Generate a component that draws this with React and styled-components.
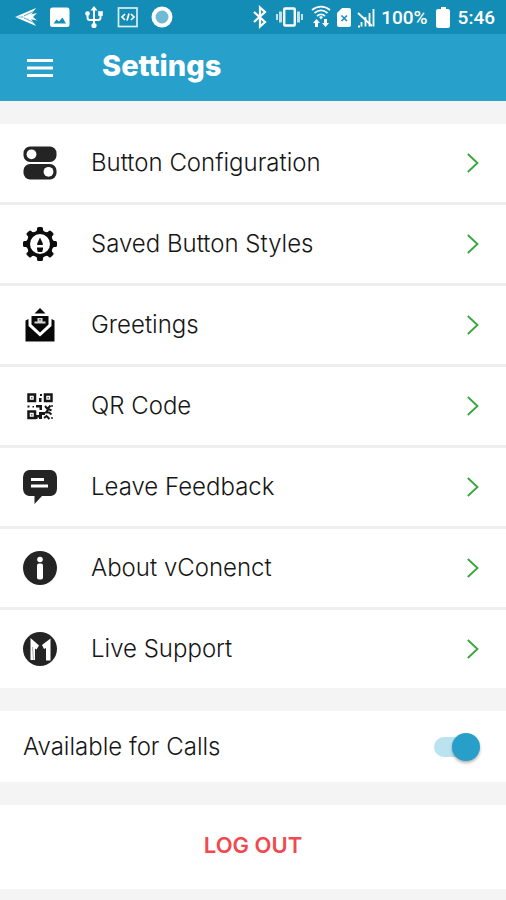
import { useState } from "react";
import styled, { createGlobalStyle } from "styled-components";

const GlobalStyle = createGlobalStyle`
  * {
    box-sizing: border-box;
  }
  body {
    margin: 0;
    background-color: #f4f4f4;
    color: #161616;
    font-family: Inter, "Open Sans", sans-serif;
  }
  svg {
    display: block;
    flex-shrink: 0;
  }
`;

const StatusBar = styled.div`
  display: flex;
  justify-content: space-between;
  align-items: center;
  height: 34px;
  padding: 0 11px 0 14px;
  background-color: #138db6;
  color: white;
  font: 500 19px Roboto, sans-serif;
`;

const StatusGroup = styled.div`
  display: flex;
  align-items: center;
  gap: ${(props) => props.$gap}px;
`;

const Header = styled.header`
  display: flex;
  align-items: center;
  gap: 48px;
  height: 67px;
  padding: 0 26px;
  background-color: #27a1cb;
  color: white;
`;

const MenuButton = styled.button`
  padding: 0;
  border: 0;
  background: none;
  color: inherit;
  cursor: pointer;
`;

const Title = styled.h1`
  margin: 0;
  padding-bottom: 4px;
  font-size: 29px;
  line-height: 36px;
  font-weight: 800;
`;

const List = styled.ul`
  display: flex;
  flex-direction: column;
  gap: 3px;
  margin: 23px 0;
  padding: 0;
  list-style: none;
  background-color: #eeeeee;
`;

const Row = styled.a`
  display: flex;
  align-items: center;
  gap: 34px;
  height: 78px;
  padding: 0 26px 0 23px;
  background-color: white;
  color: inherit;
  text-decoration: none;
`;

const RowText = styled.span`
  flex: 1;
  font-size: 24px;
  line-height: 32px;
  font-weight: 300;
`;

const CallsRow = styled.label`
  display: flex;
  align-items: center;
  height: 71px;
  padding: 0 26px 0 23px;
  background-color: white;
  cursor: pointer;
`;

const Switch = styled.input`
  appearance: none;
  position: relative;
  width: 46px;
  height: 28px;
  margin: 0;
  cursor: pointer;

  &::before {
    content: "";
    position: absolute;
    top: 4px;
    left: 0;
    width: 42px;
    height: 20px;
    border-radius: 10px;
    background-color: #dddddd;
  }
  &::after {
    content: "";
    position: absolute;
    top: 0;
    left: 0;
    width: 28px;
    height: 28px;
    border-radius: 50%;
    background-color: #f4f4f4;
    box-shadow: 0 2px 3px rgba(0, 0, 0, 0.3);
  }
  &:checked::before {
    background-color: #bbe2ef;
  }
  &:checked::after {
    left: 18px;
    background-color: #279fc8;
  }
`;

const LogoutButton = styled.button`
  display: block;
  width: 100%;
  height: 84px;
  margin: 23px 0 0;
  padding: 0 0 4px;
  border: 0;
  background-color: white;
  color: #ef4a4f;
  font: 600 22px Inter, "Open Sans", sans-serif;
  cursor: pointer;
`;

/* status bar icons */

const ArrowIcon = () => (
  <svg width="24" height="24" viewBox="0 0 24 24" fill="currentColor">
    <path d="M1 12 22 3l-5 7-7 1.500z" />
    <path d="M1 12 22 21l-5-7-7-1.500z" />
    <path d="M9 11.500 23 8l-4 4 4 3.500-14-3z" />
    <path d="m10 10.800 11-5M10 13l10 4.500" stroke="#138db6" strokeWidth=".7" />
  </svg>
);

const PictureIcon = () => (
  <svg width="24" height="24" viewBox="0 0 24 24" fill="currentColor">
    <rect x="2" y="2.500" width="19.500" height="19.500" rx="2.500" />
    <path d="m5.500 18.500 3-4 2.500 2 3.500-4 3.500 6z" fill="#138db6" />
  </svg>
);

const UsbIcon = () => (
  <svg width="24" height="24" viewBox="0 0 24 24" fill="currentColor">
    <path d="m12 1 3.500 4.500h-7z" />
    <path
      d="M12 4v15M5.500 8.500v4c0 1.500 1 2.500 2.500 2.500h8c1.500 0 2.500-1 2.500-2.500v-4"
      fill="none"
      stroke="currentColor"
      strokeWidth="2"
    />
    <circle cx="5.500" cy="8.500" r="2.300" />
    <rect x="16.200" y="6.200" width="4.600" height="4.600" />
    <circle cx="12" cy="20.500" r="2.600" />
  </svg>
);

const CodeIcon = () => (
  <svg
    width="24"
    height="24"
    viewBox="0 0 24 24"
    fill="none"
    stroke="currentColor"
    strokeWidth="1.700"
  >
    <rect x="2.500" y="3" width="18.500" height="18.500" opacity=".85" />
    <path d="M9 9 6 12l3 3M15 9l3 3-3 3M13 8.500l-2 7" />
  </svg>
);

const RecordIcon = () => (
  <svg width="24" height="24" viewBox="0 0 24 24">
    <circle cx="12" cy="12" r="10.500" fill="white" />
    <circle cx="12" cy="12" r="6.500" fill="#6fbbd5" />
  </svg>
);

const BluetoothIcon = () => (
  <svg
    width="16"
    height="24"
    viewBox="0 0 16 24"
    fill="none"
    stroke="currentColor"
    strokeWidth="2.200"
  >
    <path d="m1 7 11 10-5 4.500v-19L12 7 1 17" />
  </svg>
);

const VibrateIcon = () => (
  <svg width="30" height="24" viewBox="0 0 30 24" fill="currentColor">
    <rect x="9.200" y="3.500" width="10.600" height="17" rx="1" fill="none" stroke="currentColor" strokeWidth="2.400" />
    <path d="M4 6.500h3v11H4zM1 9h2v6H1zM22 6.500h3v11h-3zM26 9h2v6h-2z" opacity=".75" />
  </svg>
);

const WifiIcon = () => (
  <svg width="20" height="24" viewBox="0 0 20 24" fill="currentColor">
    <g fill="none" stroke="currentColor" strokeWidth="1.700">
      <path d="M1 5c5.500-4.500 12.500-4.500 18 0M3.500 8c4-3.300 9-3.300 13 0M6 11c2.500-2 5.500-2 8 0" />
    </g>
    <path d="m8 12 2-1 2 1-2 2.500z" />
    <path d="m5.500 14 3.500 4H7v4H4v-4H2zM14.500 22l-3.500-4h2v-4h3v4h2z" />
  </svg>
);

const SimIcon = () => (
  <svg width="14" height="24" viewBox="0 0 14 24">
    <path d="M5 3h7q2 0 2 2v15q0 2-2 2H2q-2 0-2-2V8z" fill="white" />
    <path d="m4.500 10.500 5.500 5.500m0-5.500L4.500 16" stroke="#138db6" strokeWidth="1.500" />
  </svg>
);

const SignalIcon = () => (
  <svg
    width="18"
    height="24"
    viewBox="0 0 18 24"
    fill="none"
    stroke="currentColor"
    strokeWidth="1.800"
  >
    <path d="M16.500 4v17.500M12.500 8v13.500M8.500 12v9.500M4.500 17v4.500M1 21.500h2" />
    <path d="m1 8 14 13" />
  </svg>
);

const BatteryIcon = () => (
  <svg width="18" height="24" viewBox="0 0 18 24" fill="currentColor">
    <path d="M7 2h5v2h2q2 0 2 2v15q0 2-2 2H4q-2 0-2-2V6q0-2 2-2h3z" />
  </svg>
);

const MenuIcon = () => (
  <svg width="28" height="20" viewBox="0 0 28 20" fill="currentColor">
    <path d="M1 1h26v3H1zM1 8.500h26v3H1zM1 16h26v3H1z" />
  </svg>
);

/* list icons, all on a 34px grid */

const TogglesIcon = () => (
  <svg width="34" height="34" viewBox="0 0 34 34" fill="#242424">
    <rect x="0.500" y="0.500" width="33" height="15.500" rx="6.500" />
    <rect x="0.500" y="18" width="33" height="15.500" rx="6.500" />
    <circle cx="8.500" cy="8.300" r="4.900" fill="white" />
    <circle cx="25.500" cy="25.800" r="4.900" fill="white" />
  </svg>
);

const GearIcon = () => (
  <svg width="34" height="34" viewBox="0 0 34 34" fill="#0c0c0c">
    {[0, 45, 90, 135, 180, 225, 270, 315].map((angle) => (
      <path
        key={angle}
        d="M12 6 14 3V1.500Q14 0 15.500 0h3Q20 0 20 1.500V3l2 3z"
        transform={`rotate(${angle} 17 17)`}
      />
    ))}
    <circle cx="17" cy="17" r="13.300" />
    <circle cx="17" cy="17" r="10" fill="white" />
    <path d="m17 10.500 2.800 6v1.500h-5.600v-1.500zM14 20.500h6v1.500l-.8 3h-4.400l-.8-3z" />
  </svg>
);

const GreetingsIcon = () => (
  <svg width="34" height="34" viewBox="0 0 34 34" fill="#080808">
    <path d="m17 0 5.500 5.500h-11z" />
    <path d="M8.500 8h17v8.500L17 24.500l-8.500-8z" />
    <path d="M2.500 12.500 5.500 11v7L17 28.500 28.500 18v-7l3 1.500v21h-29z" />
    <path d="M14.500 10h5v3.500h3v2h-11v-2h3z" fill="#d5d5d5" />
    <path d="M16.500 11h1v1.500h-1z" />
  </svg>
);

const QrIcon = () => (
  <svg width="34" height="34" viewBox="0 0 34 34" fill="#161616">
    <path
      d="M5.500 5.500h6.500v6.500H5.500zM22 5.500h6.500v6.500H22zM5.500 22.500h6.500v6.500H5.500z"
      fill="none"
      stroke="#161616"
      strokeWidth="2.500"
    />
    <path d="M8 8h1.500v1.500H8zM24.500 8H26v1.500h-1.500zM8 25h1.500v1.500H8z" opacity=".6" />
    <path d="M17 5h2v2h-2zM16 9h2.500v4H16zM4.500 16.500h2v2h-2zM9.500 17h1.500v1.500H9.500z" />
    <path d="M13 16h6v5h-2.500v-2.500H13zM16 23h6v3h-3v4h-3v-1.500h-1.500v1.500H13V26h3z" />
    <path
      d="m22 17 2.500 3 3-3.500M28.500 21.500l-3-1.500-2.500 3.500h3l2.500 2M21 29l2.500-2 3 3"
      fill="none"
      stroke="#161616"
      strokeWidth="2"
    />
    <path d="M28 16h2v2h-2zM28 28h2v2h-2z" opacity=".7" />
  </svg>
);

const FeedbackIcon = () => (
  <svg width="34" height="34" viewBox="0 0 34 34" fill="#242424">
    <path d="M6 0h22q5.500 1 6 7v12q-.5 6-6 7h-9l-7.500 8V26H6q-5.500-1-6-7V7q.5-6 6-7z" />
    <path d="M8 8h13v3H8zM8 14.500h17v3H8z" fill="white" />
  </svg>
);

const InfoIcon = () => (
  <svg width="34" height="34" viewBox="0 0 34 34">
    <circle cx="17" cy="17" r="17" fill="#242424" />
    <circle cx="17" cy="8.500" r="2.800" fill="white" />
    <rect x="14" y="12.500" width="6" height="16" rx="2" fill="white" />
  </svg>
);

const SupportIcon = () => (
  <svg width="34" height="34" viewBox="0 0 34 34">
    <circle cx="17" cy="17" r="17" fill="#242424" />
    <g fill="white">
      <path d="m7.500 6 8.500 7.500-2.500 4-1.500-1V28H7.500z" />
      <path d="M27.500 6.500 19 13l2 4 2-1v12.500h4.500z" />
    </g>
    <path d="m9.500 15 1 12.500" stroke="#aaaaaa" strokeWidth="1" />
  </svg>
);

const Chevron = () => (
  <svg width="14" height="20" viewBox="0 0 14 20" fill="none" stroke="#35a63a" strokeWidth="1.800">
    <path d="m1.800 1 9.700 9-9.700 9" />
  </svg>
);

const items = [
  { id: "buttons", label: "Button Configuration", Icon: TogglesIcon },
  { id: "styles", label: "Saved Button Styles", Icon: GearIcon },
  { id: "greetings", label: "Greetings", Icon: GreetingsIcon },
  { id: "qr", label: "QR Code", Icon: QrIcon },
  { id: "feedback", label: "Leave Feedback", Icon: FeedbackIcon },
  { id: "about", label: "About vConenct", Icon: InfoIcon },
  { id: "support", label: "Live Support", Icon: SupportIcon },
];

function App() {
  const [available, setAvailable] = useState(true);
  return (
    <>
      <GlobalStyle />
      <StatusBar>
        <StatusGroup $gap={10}>
          <ArrowIcon />
          <PictureIcon />
          <UsbIcon />
          <CodeIcon />
          <RecordIcon />
        </StatusGroup>
        <StatusGroup $gap={6}>
          <BluetoothIcon />
          <VibrateIcon />
          <WifiIcon />
          <SimIcon />
          <SignalIcon />
          <span>100%</span>
          <BatteryIcon />
          <span>5:46</span>
        </StatusGroup>
      </StatusBar>
      <Header>
        <MenuButton aria-label="Menu">
          <MenuIcon />
        </MenuButton>
        <Title>Settings</Title>
      </Header>
      <main>
        <List>
          {items.map(({ id, label, Icon }) => (
            <li key={id}>
              <Row href={`#${id}`}>
                <Icon />
                <RowText>{label}</RowText>
                <Chevron />
              </Row>
            </li>
          ))}
        </List>
        <CallsRow>
          <RowText>Available for Calls</RowText>
          <Switch
            type="checkbox"
            checked={available}
            onChange={(e) => setAvailable(e.target.checked)}
          />
        </CallsRow>
        <LogoutButton>LOG OUT</LogoutButton>
      </main>
    </>
  );
}

export default App;
